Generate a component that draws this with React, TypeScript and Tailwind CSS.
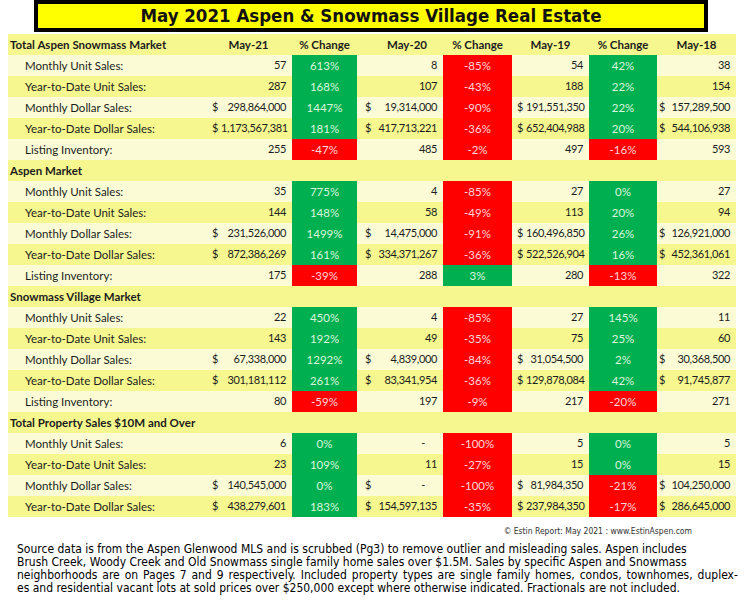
import React from "react"

/*
 * May 2021 Aspen & Snowmass Village real estate summary table.
 */

type Tone = "g" | "r"
type Pct = [string, Tone]
type Row = {
  label: string
  money?: boolean
  v21: string
  p21: Pct
  v20: string
  p20: Pct
  v19: string
  p19: Pct
  v18: string
}
type Section = { title: string; rows: Row[] }

const sections: Section[] = [
  {
    title: "Total Aspen Snowmass Market",
    rows: [
      { label: "Monthly Unit Sales:", v21: "57", p21: ["613%", "g"], v20: "8", p20: ["-85%", "r"], v19: "54", p19: ["42%", "g"], v18: "38" },
      { label: "Year-to-Date Unit Sales:", v21: "287", p21: ["168%", "g"], v20: "107", p20: ["-43%", "r"], v19: "188", p19: ["22%", "g"], v18: "154" },
      { label: "Monthly Dollar Sales:", money: true, v21: "298,864,000", p21: ["1447%", "g"], v20: "19,314,000", p20: ["-90%", "r"], v19: "191,551,350", p19: ["22%", "g"], v18: "157,289,500" },
      { label: "Year-to-Date Dollar Sales:", money: true, v21: "1,173,567,381", p21: ["181%", "g"], v20: "417,713,221", p20: ["-36%", "r"], v19: "652,404,988", p19: ["20%", "g"], v18: "544,106,938" },
      { label: "Listing Inventory:", v21: "255", p21: ["-47%", "r"], v20: "485", p20: ["-2%", "r"], v19: "497", p19: ["-16%", "r"], v18: "593" },
    ],
  },
  {
    title: "Aspen Market",
    rows: [
      { label: "Monthly Unit Sales:", v21: "35", p21: ["775%", "g"], v20: "4", p20: ["-85%", "r"], v19: "27", p19: ["0%", "g"], v18: "27" },
      { label: "Year-to-Date Unit Sales:", v21: "144", p21: ["148%", "g"], v20: "58", p20: ["-49%", "r"], v19: "113", p19: ["20%", "g"], v18: "94" },
      { label: "Monthly Dollar Sales:", money: true, v21: "231,526,000", p21: ["1499%", "g"], v20: "14,475,000", p20: ["-91%", "r"], v19: "160,496,850", p19: ["26%", "g"], v18: "126,921,000" },
      { label: "Year-to-Date Dollar Sales:", money: true, v21: "872,386,269", p21: ["161%", "g"], v20: "334,371,267", p20: ["-36%", "r"], v19: "522,526,904", p19: ["16%", "g"], v18: "452,361,061" },
      { label: "Listing Inventory:", v21: "175", p21: ["-39%", "r"], v20: "288", p20: ["3%", "g"], v19: "280", p19: ["-13%", "r"], v18: "322" },
    ],
  },
  {
    title: "Snowmass Village Market",
    rows: [
      { label: "Monthly Unit Sales:", v21: "22", p21: ["450%", "g"], v20: "4", p20: ["-85%", "r"], v19: "27", p19: ["145%", "g"], v18: "11" },
      { label: "Year-to-Date Unit Sales:", v21: "143", p21: ["192%", "g"], v20: "49", p20: ["-35%", "r"], v19: "75", p19: ["25%", "g"], v18: "60" },
      { label: "Monthly Dollar Sales:", money: true, v21: "67,338,000", p21: ["1292%", "g"], v20: "4,839,000", p20: ["-84%", "r"], v19: "31,054,500", p19: ["2%", "g"], v18: "30,368,500" },
      { label: "Year-to-Date Dollar Sales:", money: true, v21: "301,181,112", p21: ["261%", "g"], v20: "83,341,954", p20: ["-36%", "r"], v19: "129,878,084", p19: ["42%", "g"], v18: "91,745,877" },
      { label: "Listing Inventory:", v21: "80", p21: ["-59%", "r"], v20: "197", p20: ["-9%", "r"], v19: "217", p19: ["-20%", "r"], v18: "271" },
    ],
  },
  {
    title: "Total Property Sales $10M and Over",
    rows: [
      { label: "Monthly Unit Sales:", v21: "6", p21: ["0%", "g"], v20: "-", p20: ["-100%", "r"], v19: "5", p19: ["0%", "g"], v18: "5" },
      { label: "Year-to-Date Unit Sales:", v21: "23", p21: ["109%", "g"], v20: "11", p20: ["-27%", "r"], v19: "15", p19: ["0%", "g"], v18: "15" },
      { label: "Monthly Dollar Sales:", money: true, v21: "140,545,000", p21: ["0%", "g"], v20: "-", p20: ["-100%", "r"], v19: "81,984,350", p19: ["-21%", "r"], v18: "104,250,000" },
      { label: "Year-to-Date Dollar Sales:", money: true, v21: "438,279,601", p21: ["183%", "g"], v20: "154,597,135", p20: ["-35%", "r"], v19: "237,984,350", p19: ["-17%", "r"], v18: "286,645,000" },
    ],
  },
]

const GRID = "grid h-[21px] grid-cols-[197px_87px_65px_86px_69px_77px_68px_79px] items-center"
const DARK = "bg-[#f6f78e]"
const LIGHT = "bg-[#fbfcd6]"

// Excel accounting style: "$" pinned left, figure pinned right
function Value({ value, money, pl }: { value: string; money?: boolean; pl: string }) {
  const dash = value === "-"
  return (
    <div className={`flex h-full items-center justify-between gap-[3px] ${pl} pr-[6px] text-[11px] tracking-[-0.35px]`}>
      <span>{money ? "$" : ""}</span>
      <span className={dash ? "pr-[12px]" : ""}>{value}</span>
    </div>
  )
}

function PctCell({ pct }: { pct: Pct }) {
  const [text, tone] = pct
  return (
    <div
      className={`flex h-full items-center justify-center ${
        tone === "g" ? "bg-[#00b050] text-[#d9f5de]" : "bg-[#ff0000] text-[#ffd6d6]"
      }`}
    >
      {text}
    </div>
  )
}

export default function App() {
  let stripe = 0

  return (
    <div className="h-[605px] w-[749px] overflow-hidden bg-white text-[#1c1c1c]">
      {/* Title banner */}
      <div className="ml-[34px] flex h-[32px] w-[674px] items-center justify-center border-4 border-black bg-[#ffff00]">
        <h1 className="text-[18.5px] font-bold text-[#111] [font-family:'DejaVu_Sans_Condensed','DejaVu_Sans',sans-serif]">
          May 2021 Aspen &amp; Snowmass Village Real Estate
        </h1>
      </div>

      {/* Table */}
      <div className="ml-[8px] mt-[2px] w-[728px] text-[11.5px] [font-family:Lato,sans-serif]">
        {sections.map((section, si) => {
          const headStripe = stripe++ % 2 === 0 ? DARK : LIGHT
          return (
            <div key={section.title}>
              <div className={`${GRID} ${headStripe} font-bold`}>
                <div className="pl-[2px]">{section.title}</div>
                {si === 0 ? (
                  <>
                    <div className="text-center">May-21</div>
                    <div className="text-center">% Change</div>
                    <div className="pl-[14px] text-center">May-20</div>
                    <div className="text-center">% Change</div>
                    <div className="text-center">May-19</div>
                    <div className="text-center">% Change</div>
                    <div className="text-center">May-18</div>
                  </>
                ) : null}
              </div>
              {section.rows.map((row) => {
                const bg = stripe++ % 2 === 0 ? DARK : LIGHT
                return (
                  <div key={row.label} className={`${GRID} ${bg}`}>
                    <div className="pl-[17px]">{row.label}</div>
                    <Value value={row.v21} money={row.money} pl="pl-[7px]" />
                    <PctCell pct={row.p21} />
                    <Value value={row.v20} money={row.money} pl="pl-[8px]" />
                    <PctCell pct={row.p20} />
                    <Value value={row.v19} money={row.money} pl="pl-[5px]" />
                    <PctCell pct={row.p19} />
                    <Value value={row.v18} money={row.money} pl="pl-[2px]" />
                  </div>
                )
              })}
            </div>
          )
        })}
      </div>

      {/* Footer */}
      <div className="mt-[8px] flex justify-end pr-[57px] text-[8.5px] leading-[12px] text-[#333] [font-family:'DejaVu_Sans_Condensed','DejaVu_Sans',sans-serif]">
        © Estin Report: May 2021 : www.EstinAspen.com
      </div>
      <div className="mt-[6px] pl-[17px] text-[12px] leading-[13px] text-black [font-family:'DejaVu_Sans_Condensed','DejaVu_Sans',sans-serif]">
        <div className="whitespace-nowrap">
          Source data is from the Aspen Glenwood MLS and is scrubbed (Pg3) to remove outlier and misleading sales. Aspen includes
        </div>
        <div className="whitespace-nowrap">
          Brush Creek, Woody Creek and Old Snowmass single family home sales over $1.5M. Sales by specific Aspen and Snowmass
        </div>
        <div className="whitespace-nowrap [word-spacing:1.5px]">
          neighborhoods are on Pages 7 and 9 respectively. Included property types are single family homes, condos, townhomes, duplex-
        </div>
        <div className="whitespace-nowrap">
          es and residential vacant lots at sold prices over $250,000 except where otherwise indicated. Fractionals are not included.
        </div>
      </div>
    </div>
  )
}
